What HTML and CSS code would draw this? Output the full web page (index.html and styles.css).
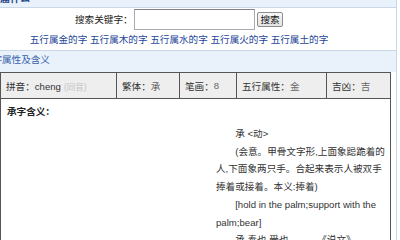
FILE: index.html
```html
<!DOCTYPE html>
<html lang="zh-CN">
<head>
<meta charset="utf-8">
<title>承字五行属什么</title>
<link rel="stylesheet" href="styles.css">
</head>
<body>
<div class="box top-box">
  <div class="bar"><span class="bar-title">属什么</span></div>
  <div class="search">
    <form class="search-row">
      <label class="search-label">搜索关键字：</label><input class="kw" type="text"><button class="btn" type="button">搜索</button>
    </form>
    <div class="links"><a href="#">五行属金的字</a> <a href="#">五行属木的字</a> <a href="#">五行属水的字</a> <a href="#">五行属火的字</a> <a href="#">五行属土的字</a></div>
  </div>
</div>
<div class="box info-box">
  <div class="bar2">字属性及含义</div>
  <div class="table">
    <div class="head">
      <div class="cell">拼音：cheng <span class="muted">(同音)</span></div>
      <div class="cell">繁体：<span class="val">承</span></div>
      <div class="cell">笔画：<span class="val">8</span></div>
      <div class="cell">五行属性：<span class="val">金</span></div>
      <div class="cell">吉凶：<span class="val">吉</span></div>
    </div>
    <div class="meaning">
      <div class="meaning-title">承字含义：</div>
      <div class="meaning-body">
        <p>承 &lt;动&gt;</p>
        <p>(会意。甲骨文字形,上面象跽跪着的人,下面象两只手。合起来表示人被双手捧着或接着。本义:捧着)</p>
        <p>[hold in the palm;support with the palm;bear]</p>
        <p>承,奉也,受也。——《说文》</p>
      </div>
    </div>
  </div>
</div>
</body>
</html>
```
FILE: styles.css
```css
html, body {
  margin: 0;
  padding: 0;
  background: #ffffff;
  overflow: hidden;
}
body {
  font-family: "Liberation Sans", "Noto Sans CJK SC", sans-serif;
  font-size: 9.6px;
  color: #333333;
}
.box {
  width: 396px;
  border-right: 1px solid #c9d7e6;
}
.bar {
  margin-top: -15px;
  padding-top: 7px;
  height: 15px;
  line-height: 14px;
  background: #e9f2fb;
  border-bottom: 1px solid #c9d7e6;
}
.bar-title {
  font-size: 10px;
  font-weight: bold;
  color: #1f4589;
}
.search {
  height: 42px;
  padding-right: 38px;
  display: flex;
  flex-direction: column;
  align-items: center;
}
.search-row {
  margin: 1px 0 0 0;
  display: flex;
  align-items: center;
  height: 21px;
}
.search-label {
  color: #222222;
  line-height: 14px;
}
.kw {
  box-sizing: border-box;
  width: 121px;
  height: 21px;
  margin: 0 0 0 1.4px;
  padding: 0;
  border: 1px solid #a7abb2;
  border-top-color: #7f848c;
  background: #ffffff;
}
.btn {
  box-sizing: border-box;
  width: 26px;
  height: 15px;
  margin: 0 0 0 2px;
  padding: 0;
  border: 1px solid #8d8d8d;
  border-radius: 2px;
  background: linear-gradient(#f7f7f7, #e3e3e3);
  font-family: "Liberation Sans", "Noto Sans CJK SC", sans-serif;
  font-size: 9.6px;
  line-height: 13px;
  color: #111111;
}
.links {
  margin-top: 3px;
  line-height: 14px;
  white-space: nowrap;
}
.links a {
  color: #1d4699;
  text-decoration: none;
}
.info-box {
  border-top: 1px solid #c9d7e6;
}
.bar2 {
  padding: 2px 0 5px 0;
  line-height: 14px;
  background: #e9f2fb;
  color: #3a63ab;
  text-indent: -7.6px;
  overflow: hidden;
  white-space: nowrap;
}
.table {
  width: 391px;
  box-sizing: border-box;
  border: 1px solid #555555;
  border-bottom: none;
}
.head {
  display: grid;
  grid-template-columns: 116px 63px 57px 90px 63px;
  height: 26px;
  background: #eeeeee;
  border-bottom: 1px solid #555555;
  box-sizing: border-box;
}
.cell {
  box-sizing: border-box;
  border-right: 1px solid #555555;
  padding-left: 5px;
  display: flex;
  align-items: center;
  white-space: nowrap;
  color: #333333;
}
.cell:last-child {
  border-right: none;
}
.val {
  color: #666666;
}
.muted {
  color: #c4c4c4;
  font-size: 8.5px;
  margin-left: 3px;
}
.meaning {
  padding: 6px 6px 20px 6px;
  height: 200px;
}
.meaning-title {
  font-weight: bold;
  line-height: 14px;
  color: #222222;
}
.meaning-body {
  margin: 6px 0 0 209px;
  width: 171px;
  line-height: 17.7px;
  color: #333333;
}
.meaning-body p {
  margin: 0;
  text-indent: 2em;
}
```
